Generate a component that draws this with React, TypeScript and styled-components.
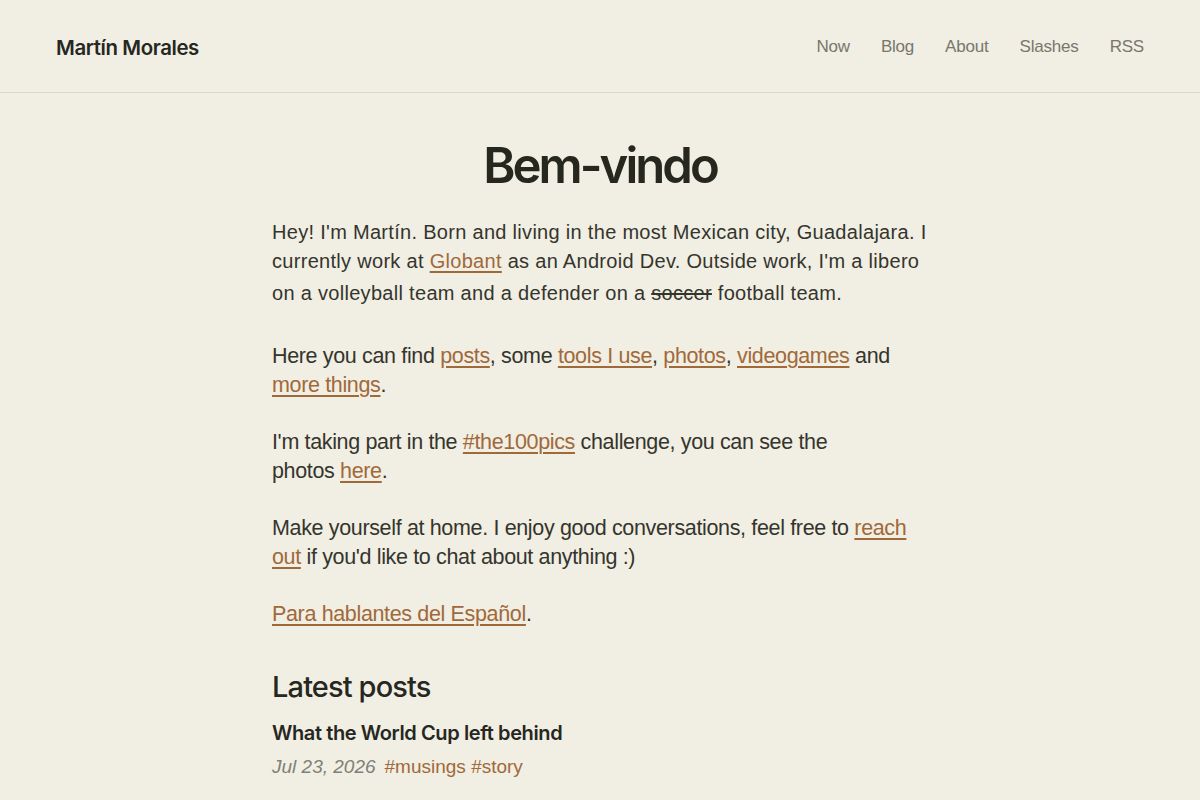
import React from "react";
import styled, { createGlobalStyle } from "styled-components";

const GlobalStyle = createGlobalStyle`
  html, body {
    margin: 0;
    padding: 0;
    background: #f1eee3;
  }
  body {
    font-family: "Liberation Sans", sans-serif;
    color: #34352d;
  }
`;

const Header = styled.header`
  display: flex;
  align-items: center;
  justify-content: space-between;
  height: 93px;
  padding: 2px 56px 0;
  box-sizing: border-box;
  border-bottom: 1px solid #d9d6ca;
`;

const Brand = styled.a`
  font-family: Inter, "Liberation Sans", sans-serif;
  font-weight: 600;
  font-size: 20.4px;
  letter-spacing: -0.02em;
  color: #26271f;
  text-decoration: none;
`;

const Nav = styled.nav`
  display: flex;
  gap: 31px;
`;

const NavLink = styled.a`
  font-family: "Liberation Sans", sans-serif;
  font-size: 17px;
  letter-spacing: -0.2px;
  color: #77776e;
  text-decoration: none;
`;

const Main = styled.main`
  max-width: 656px;
  margin: 0 auto;
  padding: 44px 0 0;
`;

const Title = styled.h1`
  font-family: Inter, "Liberation Sans", sans-serif;
  font-weight: 600;
  font-size: 49px;
  letter-spacing: -0.06em;
  line-height: 1.2;
  text-align: center;
  color: #26271f;
  margin: 0 0 22px;
`;

// the intro paragraph sets wider than the ones below it
const Para = styled.p<{ $narrow?: boolean }>`
  font-family: "Liberation Sans", sans-serif;
  font-size: ${(p) => (p.$narrow ? "21.5px" : "20px")};
  letter-spacing: ${(p) => (p.$narrow ? "-0.35px" : "0.3px")};
  line-height: 29px;
  margin: 0 0 ${(p) => (p.$narrow ? "28px" : "31px")};
`;

const Link = styled.a`
  color: #a0693a;
  text-decoration: underline;
  text-underline-offset: 3px;
  text-decoration-thickness: 1.5px;
`;

const Strike = styled.s`
  line-height: 35px;
`;

const SectionTitle = styled.h2`
  font-family: Inter, "Liberation Sans", sans-serif;
  font-weight: 500;
  font-size: 29px;
  letter-spacing: -0.03em;
  color: #26271f;
  margin: 40px 0 17px;
`;

const PostTitle = styled.h3`
  font-family: Inter, "Liberation Sans", sans-serif;
  font-weight: 600;
  font-size: 20px;
  letter-spacing: -0.02em;
  color: #26271f;
  margin: 0 0 11px;
`;

const Meta = styled.div`
  display: flex;
  gap: 9px;
  font-family: "Liberation Sans", sans-serif;
  font-size: 19px;
`;

const Date = styled.time`
  font-style: italic;
  color: #808078;
`;

const Tags = styled.span`
  color: #a0693a;
`;

export default function App() {
  return (
    <>
      <GlobalStyle />
      <Header>
        <Brand href="#">Martín Morales</Brand>
        <Nav>
          {["Now", "Blog", "About", "Slashes", "RSS"].map((item) => (
            <NavLink key={item} href="#">
              {item}
            </NavLink>
          ))}
        </Nav>
      </Header>
      <Main>
        <Title>Bem-vindo</Title>
        <Para>
          Hey! I'm Martín. Born and living in the most Mexican city, Guadalajara. I
          currently work at <Link href="#">Globant</Link> as an Android Dev. Outside
          work, I'm a libero on a volleyball team and a defender on a{" "}
          <Strike>soccer</Strike> football team.
        </Para>
        <Para $narrow>
          Here you can find <Link href="#">posts</Link>, some{" "}
          <Link href="#">tools I use</Link>, <Link href="#">photos</Link>,{" "}
          <Link href="#">videogames</Link> and <Link href="#">more things</Link>.
        </Para>
        <Para $narrow>
          I'm taking part in the <Link href="#">#the100pics</Link> challenge, you can
          see the <br />
          photos <Link href="#">here</Link>.
        </Para>
        <Para $narrow>
          Make yourself at home. I enjoy good conversations, feel free to{" "}
          <Link href="#">reach out</Link> if you'd like to chat about anything :)
        </Para>
        <Para $narrow>
          <Link href="#">Para hablantes del Español</Link>.
        </Para>
        <SectionTitle>Latest posts</SectionTitle>
        <PostTitle>What the World Cup left behind</PostTitle>
        <Meta>
          <Date>Jul 23, 2026</Date>
          <Tags>#musings #story</Tags>
        </Meta>
      </Main>
    </>
  );
}
